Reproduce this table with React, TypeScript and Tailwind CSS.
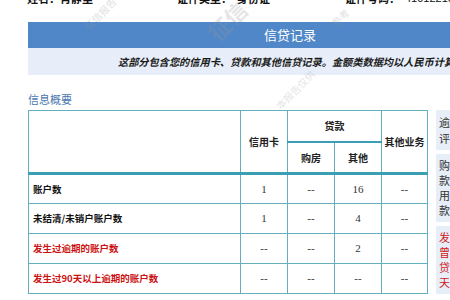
import React from "react";

const rows = [
  { label: "账户数", red: false, vals: ["1", "--", "16", "--"] },
  { label: "未结清/未销户账户数", red: false, vals: ["1", "--", "4", "--"] },
  { label: "发生过逾期的账户数", red: true, vals: ["--", "--", "2", "--"] },
  { label: "发生过90天以上逾期的账户数", red: true, vals: ["--", "--", "--", "--"] },
];

const notes = [
  { red: false, lines: ["逾期记录可能影响对您的", "评价。"] },
  { red: false, lines: ["购房贷款，包括个人住房贷", "款、个人商用房（包括商住两", "用）贷款和个人住房公积金贷", "款。"] },
  { red: true, lines: ["发生过逾期的贷记卡账户，指", "曾经“未按时还最低还款额”的", "贷记卡账户；发生过透支超过60", "天的准贷记卡账户。"] },
];

export default function App() {
  return (
    <div className="relative w-[450px] h-[300px] overflow-hidden bg-white font-['Noto_Sans_CJK_SC',sans-serif] text-[#222]">
      {/* owner line, mostly cut off at the top */}
      <div className="flex h-[22px] items-start">
        <div className="-mt-[9px] flex h-[14px] items-center whitespace-nowrap text-[11px] font-bold text-[#111]">
          <span className="ml-[27px] w-[150px]">姓名：肖静里</span>
          <span className="w-[60px]">证件类型：</span>
          <span className="w-[108px]">身份证</span>
          <span className="w-[60px]">证件号码：</span>
          <span className="font-['Liberation_Sans',sans-serif] font-normal">410122198801</span>
        </div>
      </div>

      <div className="ml-[28px] w-[524px]">
        <div className="flex h-[26px] items-center justify-center bg-[#4f87c8] text-[13px] text-white">
          信贷记录
        </div>
        <div className="flex h-[27px] items-center whitespace-nowrap bg-[#e7eef9] pl-[90px] text-[10.2px] font-bold italic text-[#1a1a1a]">
          这部分包含您的信用卡、贷款和其他信贷记录。金额类数据均以人民币计算，精确到元。
        </div>
      </div>

      <div className="ml-[28px] mt-[16px] text-[11px] leading-[16px] text-[#4a76ad]">信息概要</div>

      <div className="mt-[3px] ml-[28px] flex items-start gap-[8px]">
        <table className="w-[399px] shrink-0 table-fixed border-collapse border border-[#63aebf] text-[10px]">
          <colgroup>
            <col className="w-[212px]" />
            <col className="w-[47px]" />
            <col className="w-[47px]" />
            <col className="w-[47px]" />
            <col className="w-[46px]" />
          </colgroup>
          <thead>
            <tr className="h-[31px]">
              <th rowSpan={2} className="border border-b-[3px] border-[#63aebf] border-b-[#3a9fb3]"></th>
              <th rowSpan={2} className="border border-b-[3px] border-[#63aebf] border-b-[#3a9fb3] font-bold">信用卡</th>
              <th colSpan={2} className="border border-b-2 border-[#63aebf] border-b-[#3a9fb3] font-bold">贷款</th>
              <th rowSpan={2} className="border border-b-[3px] border-[#63aebf] border-b-[#3a9fb3] font-bold">其他业务</th>
            </tr>
            <tr className="h-[32px]">
              <th className="border border-b-[3px] border-[#63aebf] border-b-[#3a9fb3] font-bold">购房</th>
              <th className="border border-b-[3px] border-[#63aebf] border-b-[#3a9fb3] font-bold">其他</th>
            </tr>
          </thead>
          <tbody>
            {rows.map((r) => (
              <tr key={r.label} className="h-[30px]">
                <td className={`border border-[#63aebf] pl-[4px] text-[9.5px] font-bold whitespace-nowrap ${r.red ? "text-[#cc1111]" : "text-[#111]"}`}>
                  {r.label}
                </td>
                {r.vals.map((v, i) => (
                  <td key={i} className="border border-[#63aebf] text-center font-['Liberation_Serif',serif] text-[11px] text-[#333]">
                    {v}
                  </td>
                ))}
              </tr>
            ))}
          </tbody>
        </table>

        <div className="flex w-[140px] shrink-0 flex-col gap-[4px]">
          {notes.map((n, i) => (
            <div key={i} className={`bg-[#e8eef8] px-[3px] py-[4px] text-[11px] ${i === 0 ? "leading-[16px]" : "leading-[15px]"} ${n.red ? "text-[#d01818]" : "text-[#333]"}`}>
              {n.lines.map((l) => (
                <div key={l} className="whitespace-nowrap">{l}</div>
              ))}
            </div>
          ))}
        </div>
      </div>

      {/* faint watermark */}
      <div className="pointer-events-none absolute left-[80px] top-[6px] -rotate-45 whitespace-nowrap text-[10px] text-[#999] opacity-30">征信报告</div>
      <div className="pointer-events-none absolute left-[205px] top-[4px] -rotate-45 whitespace-nowrap text-[22px] font-bold text-[#999] opacity-25">征信</div>
      <div className="pointer-events-none absolute left-[330px] top-[10px] -rotate-45 whitespace-nowrap text-[10px] text-[#999] opacity-30">参考</div>
      <div className="pointer-events-none absolute left-[270px] top-[82px] -rotate-45 whitespace-nowrap text-[10px] text-[#999] opacity-25">本报告仅供</div>
    </div>
  );
}
